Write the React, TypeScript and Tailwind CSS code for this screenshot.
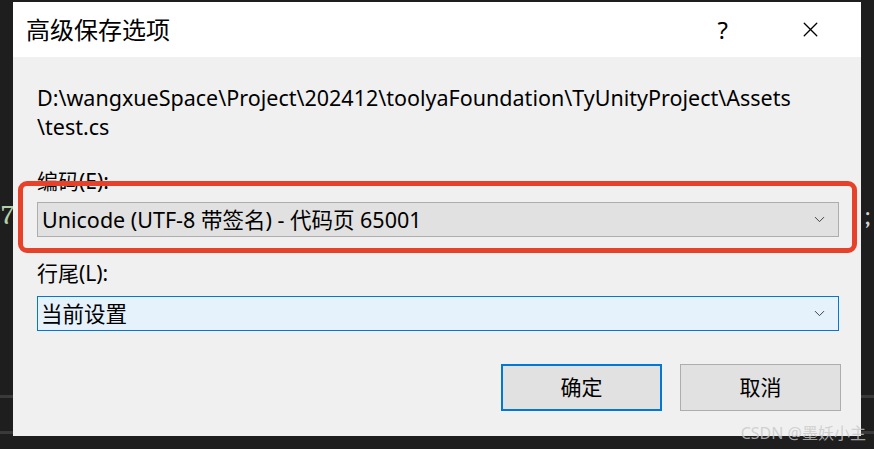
import { X, ChevronDown } from "lucide-react";

const font = { fontFamily: '"Noto Sans", "Noto Sans CJK SC", sans-serif' };

function Combo({ text, focused }: { text: string; focused?: boolean }) {
  return (
    <div
      className={
        focused
          ? "h-[35px] flex items-center justify-between border border-[#0078d7] bg-[#e5f1fb] pl-[3px] pr-[10px]"
          : "h-[35px] flex items-center justify-between border border-[#adadad] bg-[#e1e1e1] pl-[4px] pr-[10px]"
      }
    >
      <span className="text-[21.5px] leading-none text-black">{text}</span>
      <ChevronDown className="h-[17px] w-[17px] text-[#333]" strokeWidth={1.3} />
    </div>
  );
}

export default function App() {
  return (
    <div className="relative w-[874px] h-[449px] bg-[#1e1e1e] overflow-hidden" style={font}>
      {/* editor behind the dialog */}
      <div className="absolute left-0 top-[395px] w-full h-[3px] bg-[#3a3a3a]" />
      <div className="absolute left-0 top-[431px] w-full h-[3px] bg-[#3a3a3a]" />
      <div className="absolute left-[1px] top-[194px] text-[28px] text-[#b5cea8] font-serif">7</div>
      <div className="absolute left-[864px] top-[194px] text-[28px] text-[#d4d4d4] font-serif">;</div>

      <div className="relative ml-[13px] mt-[2px] w-[848px] h-[434px] flex flex-col">
        <div className="h-[55px] bg-white flex items-center pl-[13px] pr-[38px]">
          <span className="text-[24px] text-black flex-1">高级保存选项</span>
          <span className="text-[24px] text-black mr-[70px]">?</span>
          <X className="h-[25px] w-[25px] text-black" strokeWidth={1.3} />
        </div>
        <div className="flex-1 bg-[#f0f0f0] pl-[24px] pr-[22px] pt-[26px]">
          <div className="text-[21.5px] leading-[29px] text-black">
            D:\wangxueSpace\Project\202412\toolyaFoundation\TyUnityProject\Assets
            <br />\test.cs
          </div>
          <div className="mt-[28px] text-[21px] leading-[24px] text-black">编码(E):</div>
          <div className="mt-[9px]">
            <Combo text="Unicode (UTF-8 带签名) - 代码页 65001" />
          </div>
          <div className="mt-[24px] text-[21px] leading-[24px] text-black">行尾(L):</div>
          <div className="mt-[11px]">
            <Combo text="当前设置" focused />
          </div>
          <div className="mt-[33px] -mr-[2px] flex justify-end gap-[18px]">
            <button className="w-[161px] h-[47px] border-2 border-[#0078d7] bg-[#e1e1e1] text-[21px] text-black">
              确定
            </button>
            <button className="w-[161px] h-[47px] border border-[#adadad] bg-[#e1e1e1] text-[21px] text-black">
              取消
            </button>
          </div>
        </div>

        {/* red annotation */}
        <div className="absolute left-[5px] top-[179px] w-[839px] h-[72px] border-[5px] border-[#e8412a] rounded-[9px]" />
      </div>

      <div className="absolute right-[8px] bottom-[4px] text-[16px] text-[#c8c8c8]/80">CSDN @墨妖小主</div>
    </div>
  );
}
